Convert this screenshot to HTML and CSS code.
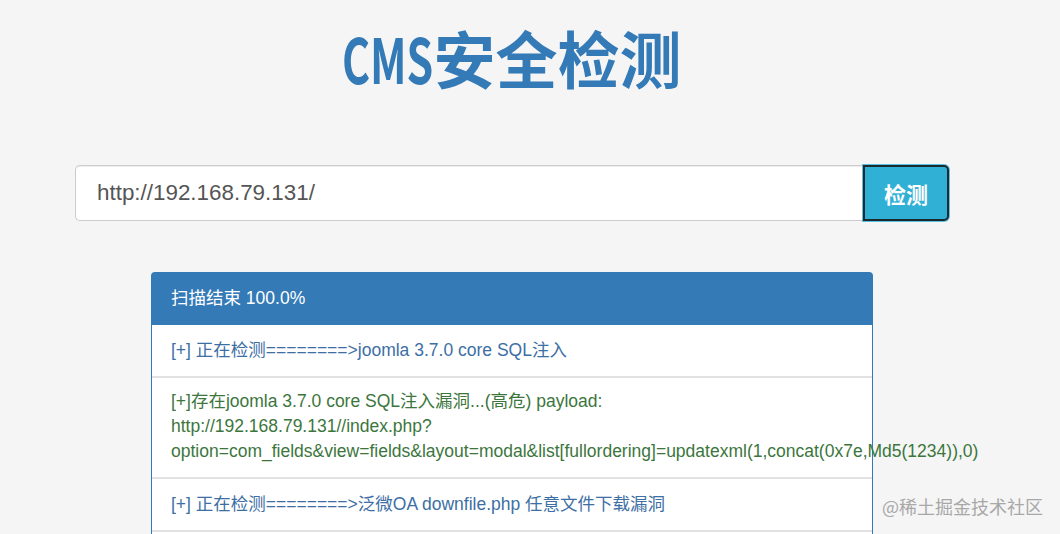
FILE: index.html
```html
<!DOCTYPE html>
<html lang="zh-CN">
<head>
  <meta charset="UTF-8" />
  <meta name="viewport" content="width=device-width, initial-scale=1.0"/>
  <title>CMS安全检测</title>
  <link rel="stylesheet" href="styles.css">
</head>
<body>

  <div class="container">
    <h1 class="title"><span class="title-cms">CMS</span>安全检测</h1>

    <form class="search" onsubmit="return false">
      <input class="search-input" type="text" value="http://192.168.79.131/">
      <button class="search-btn" type="submit">检测</button>
    </form>

    <div class="panel">
      <div class="panel-heading">扫描结束 100.0%</div>
      <ul class="result-list">
        <li class="result info">[+] 正在检测========&gt;joomla 3.7.0 core SQL注入</li>
        <li class="result found">[+]存在joomla 3.7.0 core SQL注入漏洞...(高危) payload: http://192.168.79.131//index.php?option=com_fields&amp;view=fields&amp;layout=modal&amp;list[fullordering]=updatexml(1,concat(0x7e,Md5(1234)),0)</li>
        <li class="result info">[+] 正在检测========&gt;泛微OA downfile.php 任意文件下载漏洞</li>
      </ul>
    </div>
  </div>

  <div class="watermark">@稀土掘金技术社区</div>

</body>
</html>
```

FILE: styles.css
```css
html, body {
  height: 100%;
  overflow: hidden;
}

body {
  margin: 0;
  background: #f5f5f5;
  font-family: "Liberation Sans", Arial, "Noto Sans CJK SC", sans-serif;
  color: #333;
}

.container {
  width: 1024px;
  display: flex;
  flex-direction: column;
  align-items: center;
}

.title {
  margin: 21px 0 0;
  font-family: "Noto Sans CJK SC", sans-serif;
  font-size: 62px;
  line-height: 72px;
  font-weight: bold;
  color: #337ab7;
}

/* the original heading font is a narrow one */
.title-cms {
  display: inline-block;
  transform: scaleX(.69);
  transform-origin: left center;
  margin-right: -41px;
}

.search {
  display: flex;
  width: 874px;
  height: 56px;
  margin-top: 72px;
}

.search-input {
  flex: 1;
  min-width: 0;
  height: 56px;
  box-sizing: border-box;
  padding: 0 21px;
  border: 1px solid #ccc;
  border-right: none;
  border-radius: 5px 0 0 5px;
  box-shadow: inset 0 1px 1px rgba(0, 0, 0, .075);
  background: #fff;
  font-family: "Liberation Sans", Arial, sans-serif;
  font-size: 22.4px;
  color: #555;
  outline: none;
}

.search-btn {
  width: 86px;
  height: 56px;
  box-sizing: border-box;
  border: 2px solid #1b2a30;
  border-radius: 0 5px 5px 0;
  box-shadow: 0 0 0 1px #5bc0de;
  background: #31b0d5;
  color: #fff;
  font-family: "Noto Sans CJK SC", sans-serif;
  font-size: 22px;
  font-weight: bold;
  cursor: pointer;
}

.panel {
  width: 722px;
  box-sizing: border-box;
  margin-top: 51px;
  padding-bottom: 2px;
  border: 1px solid #337ab7;
  border-bottom: none;
  border-radius: 4px 4px 0 0;
  background: #fff;
}

.panel-heading {
  height: 52px;
  box-sizing: border-box;
  padding: 0 19px;
  background: #337ab7;
  color: #fff;
  font-size: 17.5px;
  line-height: 51px;
}

.result-list {
  margin: 0;
  padding: 0;
  list-style: none;
}

.result {
  padding: 13px 19px;
  font-size: 17.5px;
  line-height: 25px;
}

.result + .result {
  border-top: 2px solid #e2e2e2;
}

.result:last-child {
  border-bottom: 2px solid #e2e2e2;
}

.info {
  color: #3d6fa5;
}

.found {
  color: #3c763d;
  padding-top: 11px;
}

.watermark {
  position: absolute;
  right: 17px;
  bottom: 15px;
  font-family: "Noto Sans CJK SC", sans-serif;
  font-size: 18px;
  color: #a8a8a8;
}
```
